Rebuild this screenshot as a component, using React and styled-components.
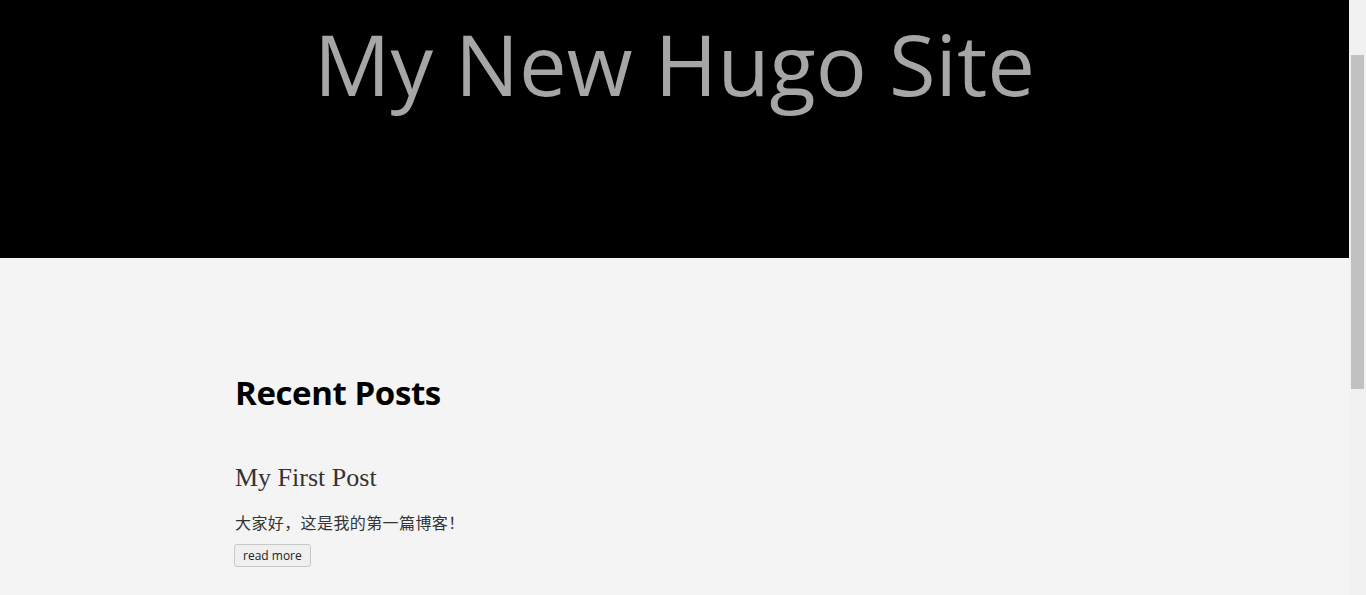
import React from "react";
import styled, { createGlobalStyle } from "styled-components";

const Global = createGlobalStyle`
  html, body { margin: 0; padding: 0; }
  body {
    background: #f4f4f4;
    font-family: "Open Sans", "Noto Sans CJK SC", sans-serif;
    color: #333;
    overflow: hidden;
  }
`;

const Page = styled.div`
  padding-right: 17px;
  height: 100vh;
  box-sizing: border-box;
`;

const Header = styled.header`
  background: #000;
  height: 258px;
  display: flex;
  justify-content: center;
  align-items: flex-start;
  padding-top: 17px;
  box-sizing: border-box;
`;

const SiteTitle = styled.h1`
  margin: 0;
  font-family: "Open Sans", sans-serif;
  font-weight: 400;
  font-size: 85px;
  line-height: 1.1;
  color: #a6a6a6;
`;

const Main = styled.main`
  width: 881px;
  margin: 0 auto;
  padding: 112px 0 0;
`;

const SectionTitle = styled.h2`
  margin: 0 0 48px;
  padding-left: 1px;
  font-family: "Open Sans", sans-serif;
  font-weight: 700;
  font-size: 33px;
  color: #000;
  letter-spacing: -0.4px;
`;

const Post = styled.article``;

const PostTitle = styled.h3`
  margin: 0 0 17px;
  padding-left: 1px;
  font-family: "Liberation Serif", serif;
  font-weight: 400;
  font-size: 26px;
  color: #333;
`;

const Summary = styled.p`
  margin: 0 0 9px;
  padding-left: 1px;
  font-family: "Noto Sans CJK SC", sans-serif;
  font-size: 16px;
  letter-spacing: 0.4px;
  color: #333;
`;

const ReadMore = styled.button`
  font-family: "Open Sans", sans-serif;
  font-size: 12px;
  color: #222;
  background: #efefef;
  border: 1px solid #c8c8c8;
  border-radius: 3px;
  padding: 1px 8px;
  height: 23px;
`;

const ScrollTrack = styled.div`
  position: fixed;
  top: 0;
  right: 0;
  bottom: 0;
  width: 17px;
  background: #f1f1f1;
  display: flex;
  flex-direction: column;
  align-items: center;
`;

const ScrollThumb = styled.div`
  margin-top: 55px;
  width: 13px;
  height: 334px;
  background: #c1c1c1;
`;

export default function App() {
  return (
    <>
      <Global />
      <Page>
        <Header>
          <SiteTitle>My New Hugo Site</SiteTitle>
        </Header>
        <Main>
          <SectionTitle>Recent Posts</SectionTitle>
          <Post>
            <PostTitle>My First Post</PostTitle>
            <Summary>大家好，这是我的第一篇博客！</Summary>
            <ReadMore>read more</ReadMore>
          </Post>
        </Main>
      </Page>
      <ScrollTrack aria-hidden="true">
        <ScrollThumb />
      </ScrollTrack>
    </>
  );
}
